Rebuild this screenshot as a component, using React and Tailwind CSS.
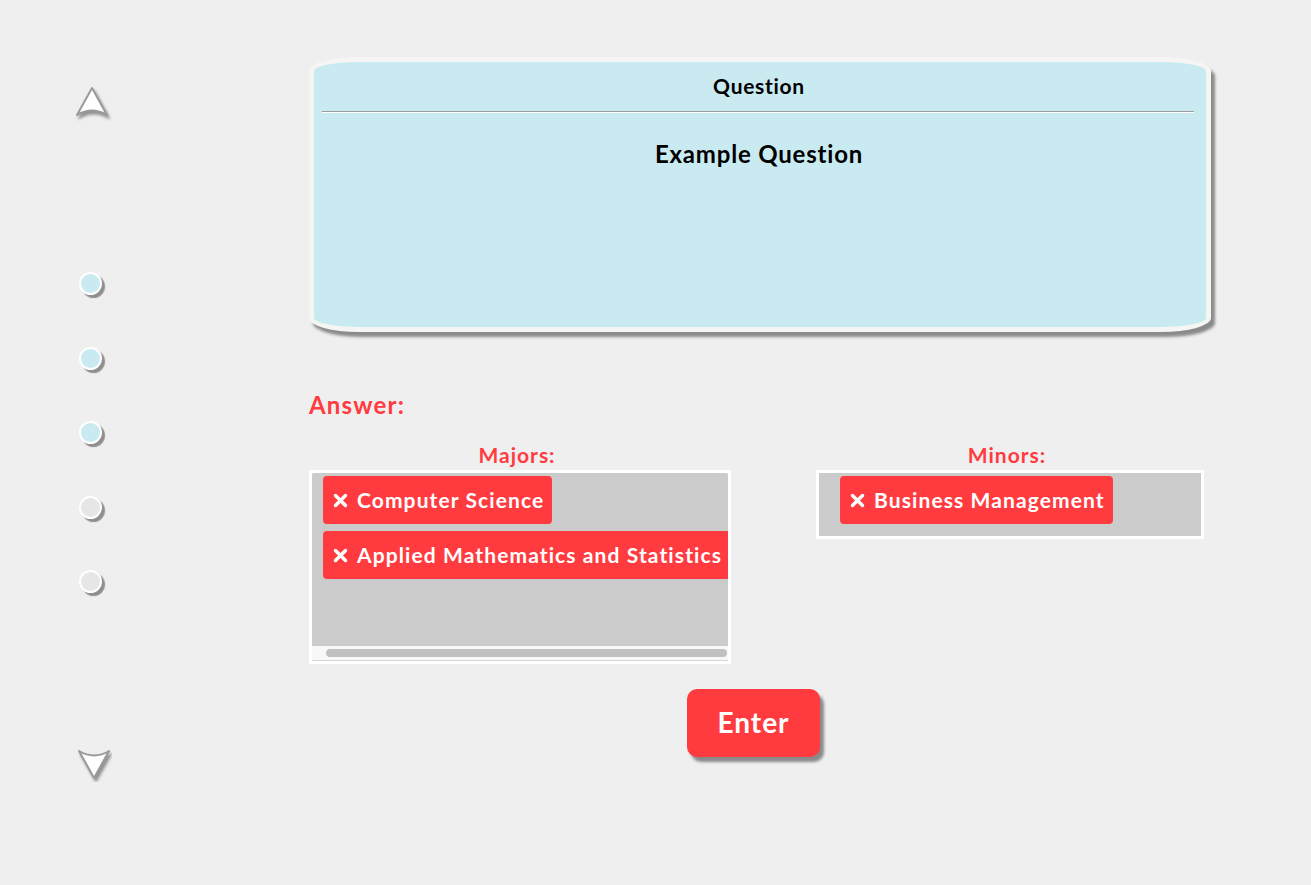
import React from 'react';

const font = { fontFamily: 'Lato, "Noto Sans", sans-serif' };

const Arrow = ({ down }) => (
    <svg width="40" height="38" viewBox="0 0 40 38" className={down ? 'rotate-180' : ''}>
        <defs>
            <filter id={down ? 'shDown' : 'shUp'} x="-30%" y="-30%" width="160%" height="160%">
                <feDropShadow dx={down ? -2 : 2} dy={down ? -3 : 3} stdDeviation="1.5" floodColor="#777" floodOpacity="0.8" />
            </filter>
        </defs>
        <path
            d="M18 4 L33 31 Q18 22 3 31 Z"
            fill="#fff"
            stroke="#9a9a9a"
            strokeWidth="2"
            strokeLinejoin="round"
            filter={`url(#${down ? 'shDown' : 'shUp'})`}
        />
    </svg>
);

const Dot = ({ active }) => (
    <div className={`w-[23px] h-[23px] rounded-full border-2 border-white shadow-[3px_3px_1px_#8f8f8f] ${active ? 'bg-[#c9eaf1]' : 'bg-[#e6e6e6]'}`}></div>
);

const XIcon = () => (
    <svg width="15" height="15" viewBox="0 0 15 15" className="shrink-0">
        <path d="M2.5 2.5 L12.5 12.5 M12.5 2.5 L2.5 12.5" stroke="#fff" strokeWidth="3.4" strokeLinecap="round" />
    </svg>
);

const Chip = ({ label }) => (
    <div className="h-[48px] shrink-0 flex items-center gap-[9px] pl-[10px] pr-[8px] bg-[#ff3b3f] rounded-[4px] text-white text-[21px] font-bold whitespace-nowrap tracking-[1.1px]">
        <XIcon />
        <span>{label}</span>
    </div>
);

export default function App() {
    return (
        <div className="min-h-screen w-full bg-[#efefef] flex" style={font}>
            {/* NAV LATERAL */}
            <div className="w-[309px] shrink-0 flex flex-col items-start pl-[74px] pt-[84px]">
                <Arrow />
                <div className="flex flex-col gap-[51.5px] mt-[150px] ml-[5px]">
                    <Dot active />
                    <Dot active />
                    <Dot active />
                    <Dot />
                    <Dot />
                </div>
                <div className="mt-[151px] -ml-[2px]">
                    <Arrow down />
                </div>
            </div>

            {/* CONTENIDO */}
            <div className="flex-1 pt-[57px]">
                <div className="w-[902px] h-[275px] bg-[#c9eaf1] border-[5px] border-[#f5f5f5] rounded-[50px/14px] shadow-[4px_5px_3px_#8a8a8a] flex flex-col">
                    <div className="text-center text-black text-[21px] font-bold pt-[12px] leading-[24px] tracking-[0.7px] pr-[2px]">Question</div>
                    <div className="mx-[8px] mr-[12px] mt-[13px] border-t border-[#9c9c9c] border-b border-b-white"></div>
                    <div className="text-center text-black text-[24px] font-bold mt-[27px] leading-[28px] tracking-[0.8px] pr-[2px]">Example Question</div>
                </div>

                <div className="mt-[59px] text-[#ff3b3f] text-[24px] font-bold leading-[28px] tracking-[1.2px]">Answer:</div>

                <div className="flex gap-[85px] mt-[20px]">
                    <div className="flex flex-col w-[422px]">
                        <div className="text-center text-[#ff3b3f] text-[21px] font-bold leading-[31px] tracking-[1px] pr-[6px]">Majors:</div>
                        <div className="h-[194px] border-[3px] border-white bg-[#f8f8f8] flex flex-col">
                            <div className="h-[173px] bg-[#cbcbcb] overflow-hidden pl-[11px] pt-[3px] flex flex-col gap-[7px] rounded-t-[2px]">
                                <div className="flex"><Chip label="Computer Science" /></div>
                                <div className="flex"><Chip label="Applied Mathematics and Statistics" /></div>
                            </div>
                            <div className="flex-1 flex items-center pl-[14px] pr-[1px] border-b border-[#d6d6d6]">
                                <div className="w-full h-[8px] rounded-full bg-[#c1c1c1]"></div>
                            </div>
                        </div>
                    </div>

                    <div className="flex flex-col w-[388px]">
                        <div className="text-center text-[#ff3b3f] text-[21px] font-bold leading-[31px] tracking-[1px] pr-[6px]">Minors:</div>
                        <div className="h-[69px] border-[3px] border-white bg-[#cbcbcb] pl-[21px] pt-[3px] flex">
                            <div><Chip label="Business Management" /></div>
                        </div>
                    </div>
                </div>

                <div className="w-[895px] flex justify-center pr-[6px] mt-[25px]">
                    <button className="w-[133px] h-[68px] rounded-[10px] bg-[#ff3b3f] text-white text-[28px] font-bold tracking-[1px] pb-[3px] shadow-[4px_5px_3px_#8a8a8a]">
                        Enter
                    </button>
                </div>
            </div>
        </div>
    );
}
